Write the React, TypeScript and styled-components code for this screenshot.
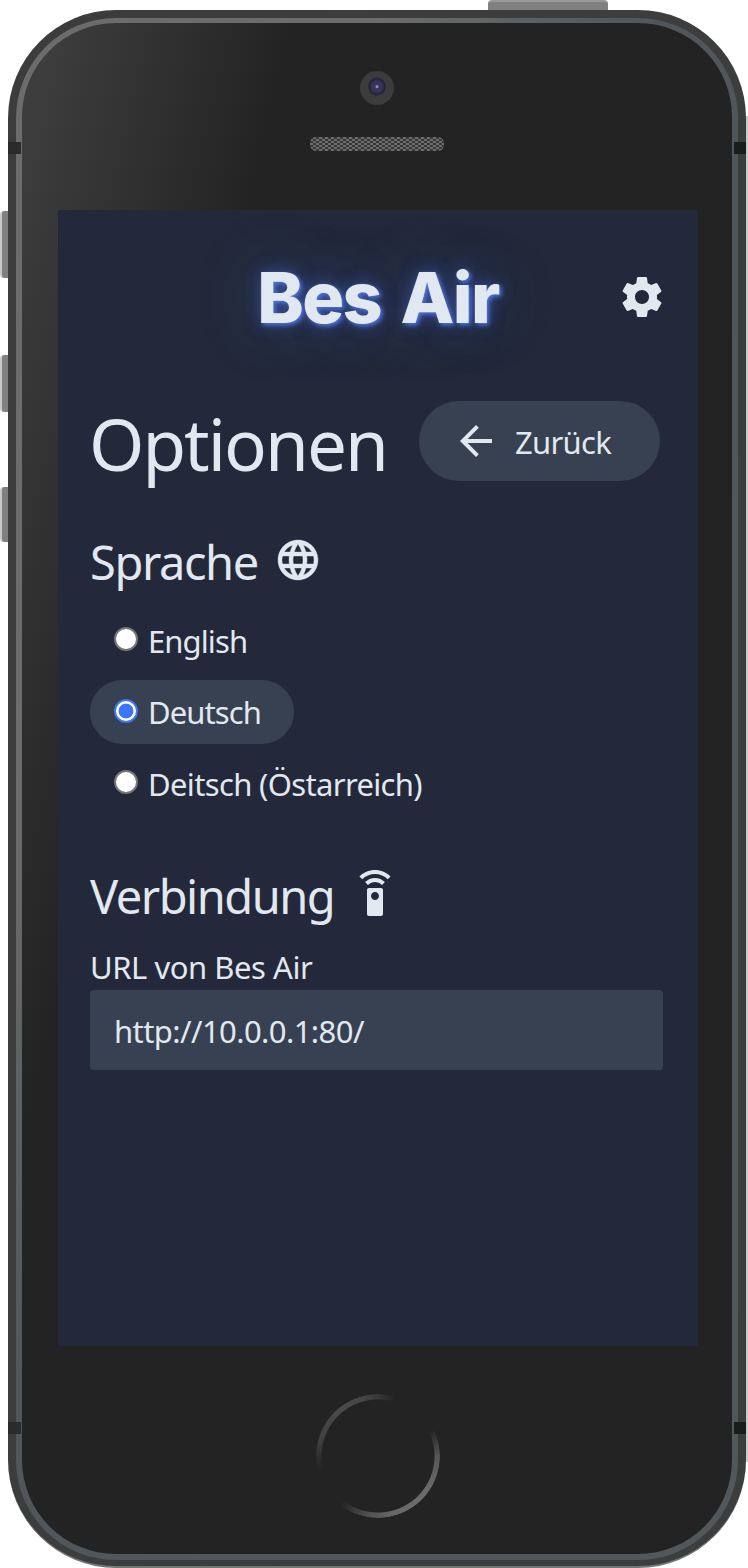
import React, { useState } from "react";
import styled, { createGlobalStyle } from "styled-components";
import { MdArrowBack, MdLanguage, MdSettingsRemote } from "react-icons/md";

const GlobalStyle = createGlobalStyle`
  * { box-sizing: border-box; }
  body {
    margin: 0;
    background: #fff;
    font-family: "Noto Sans", "Open Sans", sans-serif;
    color: #e2e8f0;
  }
`;

const Stage = styled.div`
  position: relative;
  width: 748px;
  height: 1568px;
  padding: 10px 2px 0 8px;
  overflow: hidden;
`;

const SideButton = styled.div<{ $top: number; $height: number }>`
  position: absolute;
  left: 0;
  top: ${(p) => p.$top}px;
  width: 10px;
  height: ${(p) => p.$height}px;
  border-left: 2px solid #c8c8c8;
  border-radius: 4px 0 0 4px;
  background: #808082;
`;

const PowerButton = styled.div`
  position: absolute;
  left: 488px;
  top: 0;
  width: 120px;
  height: 12px;
  border-top: 2px solid #9a9a9a;
  border-radius: 4px 4px 0 0;
  background: #808080;
`;

const Shell = styled.div`
  position: relative;
  width: 738px;
  height: 1558px;
  padding: 8px 8px 6px;
  border-radius: 108px;
  border-bottom: 2px solid #747674;
  background: linear-gradient(100deg, #3c3c3c 20%, #3b3e3d 60%);
`;

const EdgeLight = styled.div`
  position: absolute;
  top: 106px;
  bottom: 104px;
  right: -2px;
  width: 2px;
  background: #c8c9c8;
`;

const Rim = styled.div`
  height: 100%;
  padding: 5px 6px 6px;
  border-radius: 100px;
  background: linear-gradient(115deg, #6c6c6c 25%, #50565a 45%, #52575a 100%);
`;

const Face = styled.div`
  display: flex;
  flex-direction: column;
  align-items: center;
  height: 100%;
  border-radius: 94px;
  background: linear-gradient(103.5deg, #3d3d3d 30px, #232323 265px);
`;

const Antenna = styled.div<{ $top: number; $right?: boolean }>`
  position: absolute;
  top: ${(p) => p.$top}px;
  ${(p) => (p.$right ? "right: 0;" : "left: 0;")}
  width: ${(p) => (p.$right ? 12 : 13)}px;
  height: 12px;
  background: ${(p) => (p.$right ? "#1b1d1c" : "#2b2b2b")};
`;

const Camera = styled.div`
  flex: none;
  width: 34px;
  height: 34px;
  margin: 48px 0 0 0;
  border-radius: 50%;
  background: radial-gradient(circle at 50% 46%, #8c8cb0 0 1px, #35355a 2px 5px, #222236 8px, #3c3c3d 9.5px);
`;

const Speaker = styled.div`
  flex: none;
  width: 134px;
  height: 14px;
  margin: 32px 0 59px;
  border-radius: 6px;
  background: repeating-conic-gradient(#6c6c6c 0 25%, #393939 0 50%) 0 0 / 6px 4px;
`;

const Screen = styled.main`
  flex: none;
  display: flex;
  flex-direction: column;
  align-items: flex-start;
  width: 640px;
  height: 1136px;
  margin-left: 2px;
  padding: 0 32px;
  background: #23293a;
`;

const HomeButton = styled.div`
  flex: none;
  width: 124px;
  height: 124px;
  margin: 48px 0 0 2px;
  border-radius: 50%;
  background: conic-gradient(
    #383838 0deg, #232323 16deg, #232323 64deg, #555 90deg, #6c6c6c 125deg,
    #686868 165deg, #505050 190deg, #232323 218deg, #232323 258deg, #404040 285deg,
    #4a4a4a 320deg, #464646 345deg, #383838 360deg
  );
  mask: radial-gradient(circle, transparent 56px, #000 57px);
`;

const Header = styled.header`
  display: grid;
  grid-template-columns: 48px 1fr 48px;
  align-items: center;
  width: 100%;
  height: 174px;
`;

const Brand = styled.div`
  justify-self: center;
  padding-top: 1px;
  font: 800 70px/84px Inter, sans-serif;
  letter-spacing: -1.7px;
  word-spacing: 6px;
  white-space: nowrap;
  text-shadow: 2px 2px 4px #4f76e6, 0 0 16px rgba(79, 118, 230, 0.5), 0 0 60px rgba(66, 110, 220, 0.35);
`;

const IconButton = styled.button`
  display: flex;
  padding: 0;
  border: 0;
  background: none;
  color: inherit;
`;

const TitleRow = styled.div`
  display: flex;
  align-items: center;
  justify-content: space-between;
  width: 570px;
  height: 114px;
`;

const Title = styled.h1`
  margin: 0 0 0 -1px;
  padding-top: 6px;
  font-size: 71px;
  font-weight: 400;
  line-height: 96px;
  letter-spacing: -2px;
  white-space: nowrap;
`;

const BackButton = styled.button`
  display: flex;
  align-items: center;
  gap: 15px;
  width: 241px;
  height: 80px;
  padding: 0 0 0 33px;
  border: 0;
  border-radius: 40px;
  background: #374151;
  color: inherit;
  font: 400 31px/44px "Noto Sans", sans-serif;
  letter-spacing: -0.7px;
`;

const BackText = styled.span`
  padding-top: 2px;
`;

const SectionTitle = styled.h2<{ $top: number; $gap: number; $spacing: number }>`
  display: flex;
  align-items: center;
  gap: ${(p) => p.$gap}px;
  height: 72px;
  margin: ${(p) => p.$top}px 0 0;
  font-size: 47px;
  font-weight: 400;
  line-height: 64px;
  letter-spacing: ${(p) => p.$spacing}px;
  white-space: nowrap;
`;

const SectionText = styled.span`
  padding-top: 4px;
`;

const Options = styled.div`
  display: flex;
  flex-direction: column;
  align-items: flex-start;
  gap: 7.5px;
  margin-top: 12px;
`;

const Option = styled.label<{ $selected: boolean; $spacing: number }>`
  display: flex;
  align-items: center;
  gap: 10px;
  height: 64px;
  padding: 0 33px 0 24px;
  border-radius: 32px;
  background: ${(p) => (p.$selected ? "#374151" : "transparent")};
  font-size: 31px;
  line-height: 44px;
  letter-spacing: ${(p) => p.$spacing}px;
  white-space: nowrap;
`;

const OptionText = styled.span`
  padding-top: 1px;
`;

const Radio = styled.input`
  appearance: none;
  flex: none;
  width: 24px;
  height: 24px;
  margin: 0 0 2px;
  border: 2px solid #767676;
  border-radius: 50%;
  background: #fff;
  &:checked {
    border-color: #3b76f6;
    background: radial-gradient(circle, #3b76ff 7px, #fff 7.8px);
  }
`;

const FieldLabel = styled.label`
  margin: 15px 0 1px;
  font-size: 31px;
  line-height: 44px;
  letter-spacing: -0.45px;
  white-space: nowrap;
`;

const Field = styled.input`
  width: 573px;
  height: 80px;
  padding: 1px 24px 0;
  border: 0;
  border-radius: 4px;
  outline: 0;
  background: #374151;
  color: inherit;
  font: 400 31px/44px "Noto Sans", sans-serif;
  letter-spacing: -0.58px;
`;

const GearIcon = () => (
  <svg width="48" height="48" viewBox="0 0 24 24" fill="currentColor">
    <path d="M19.43 12.98c.04-.32.07-.64.07-.98s-.03-.66-.07-.98l2.11-1.65c.19-.15.24-.42.12-.64l-2-3.46c-.12-.22-.39-.3-.61-.22l-2.49 1c-.52-.4-1.08-.73-1.69-.98l-.38-2.65C14.46 2.18 14.25 2 14 2h-4c-.25 0-.46.18-.49.42l-.38 2.65c-.61.25-1.17.59-1.69.98l-2.49-1c-.23-.09-.49 0-.61.22l-2 3.46c-.13.22-.07.49.12.64l2.11 1.65c-.04.32-.07.65-.07.98s.03.66.07.98l-2.11 1.65c-.19.15-.24.42-.12.64l2 3.46c.12.22.39.3.61.22l2.49-1c.52.4 1.08.73 1.69.98l.38 2.65c.03.24.24.42.49.42h4c.25 0 .46-.18.49-.42l.38-2.65c.61-.25 1.17-.59 1.69-.98l2.49 1c.23.09.49 0 .61-.22l2-3.46c.12-.22.07-.49-.12-.64l-2.11-1.65zM12 15.5c-1.93 0-3.5-1.57-3.5-3.5s1.57-3.5 3.5-3.5 3.5 1.57 3.5 3.5-1.57 3.5-3.5 3.5z" />
  </svg>
);

const GlobeIcon = styled(MdLanguage)`
  margin-left: -1px;
  path:not([fill="none"]) {
    stroke: currentColor;
    stroke-width: 0.2px;
  }
  path[fill="none"] {
    stroke: none;
  }
`;

const languages = [
  { id: "en", label: "English", spacing: -0.9 },
  { id: "de", label: "Deutsch", spacing: -0.9 },
  { id: "at", label: "Deitsch (Östarreich)", spacing: -0.65 },
];

export default function App() {
  const [language, setLanguage] = useState("de");
  const [url, setUrl] = useState("http://10.0.0.1:80/");

  return (
    <Stage>
      <GlobalStyle />
      <PowerButton />
      <SideButton $top={211} $height={67} />
      <SideButton $top={355} $height={57} />
      <SideButton $top={487} $height={55} />
      <Shell>
        <EdgeLight />
        <Rim>
          <Face>
            <Camera />
            <Speaker />
            <Screen>
              <Header>
                <span />
                <Brand>Bes Air</Brand>
                <IconButton aria-label="Optionen">
                  <GearIcon />
                </IconButton>
              </Header>
              <TitleRow>
                <Title>Optionen</Title>
                <BackButton>
                  <MdArrowBack size={48} />
                  <BackText>Zurück</BackText>
                </BackButton>
              </TitleRow>
              <SectionTitle $top={26} $gap={17} $spacing={-1.4}>
                <SectionText>Sprache</SectionText>
                <GlobeIcon size={48} />
              </SectionTitle>
              <Options>
                {languages.map((l) => (
                  <Option key={l.id} $selected={l.id === language} $spacing={l.spacing}>
                    <Radio
                      type="radio"
                      name="language"
                      checked={l.id === language}
                      onChange={() => setLanguage(l.id)}
                    />
                    <OptionText>{l.label}</OptionText>
                  </Option>
                ))}
              </Options>
              <SectionTitle $top={43} $gap={17} $spacing={-1.5}>
                <SectionText>Verbindung</SectionText>
                <MdSettingsRemote size={48} />
              </SectionTitle>
              <FieldLabel htmlFor="url">URL von Bes Air</FieldLabel>
              <Field id="url" value={url} onChange={(e) => setUrl(e.target.value)} />
            </Screen>
            <HomeButton />
          </Face>
        </Rim>
        <Antenna $top={132} />
        <Antenna $top={132} $right />
        <Antenna $top={1412} />
        <Antenna $top={1412} $right />
      </Shell>
    </Stage>
  );
}
